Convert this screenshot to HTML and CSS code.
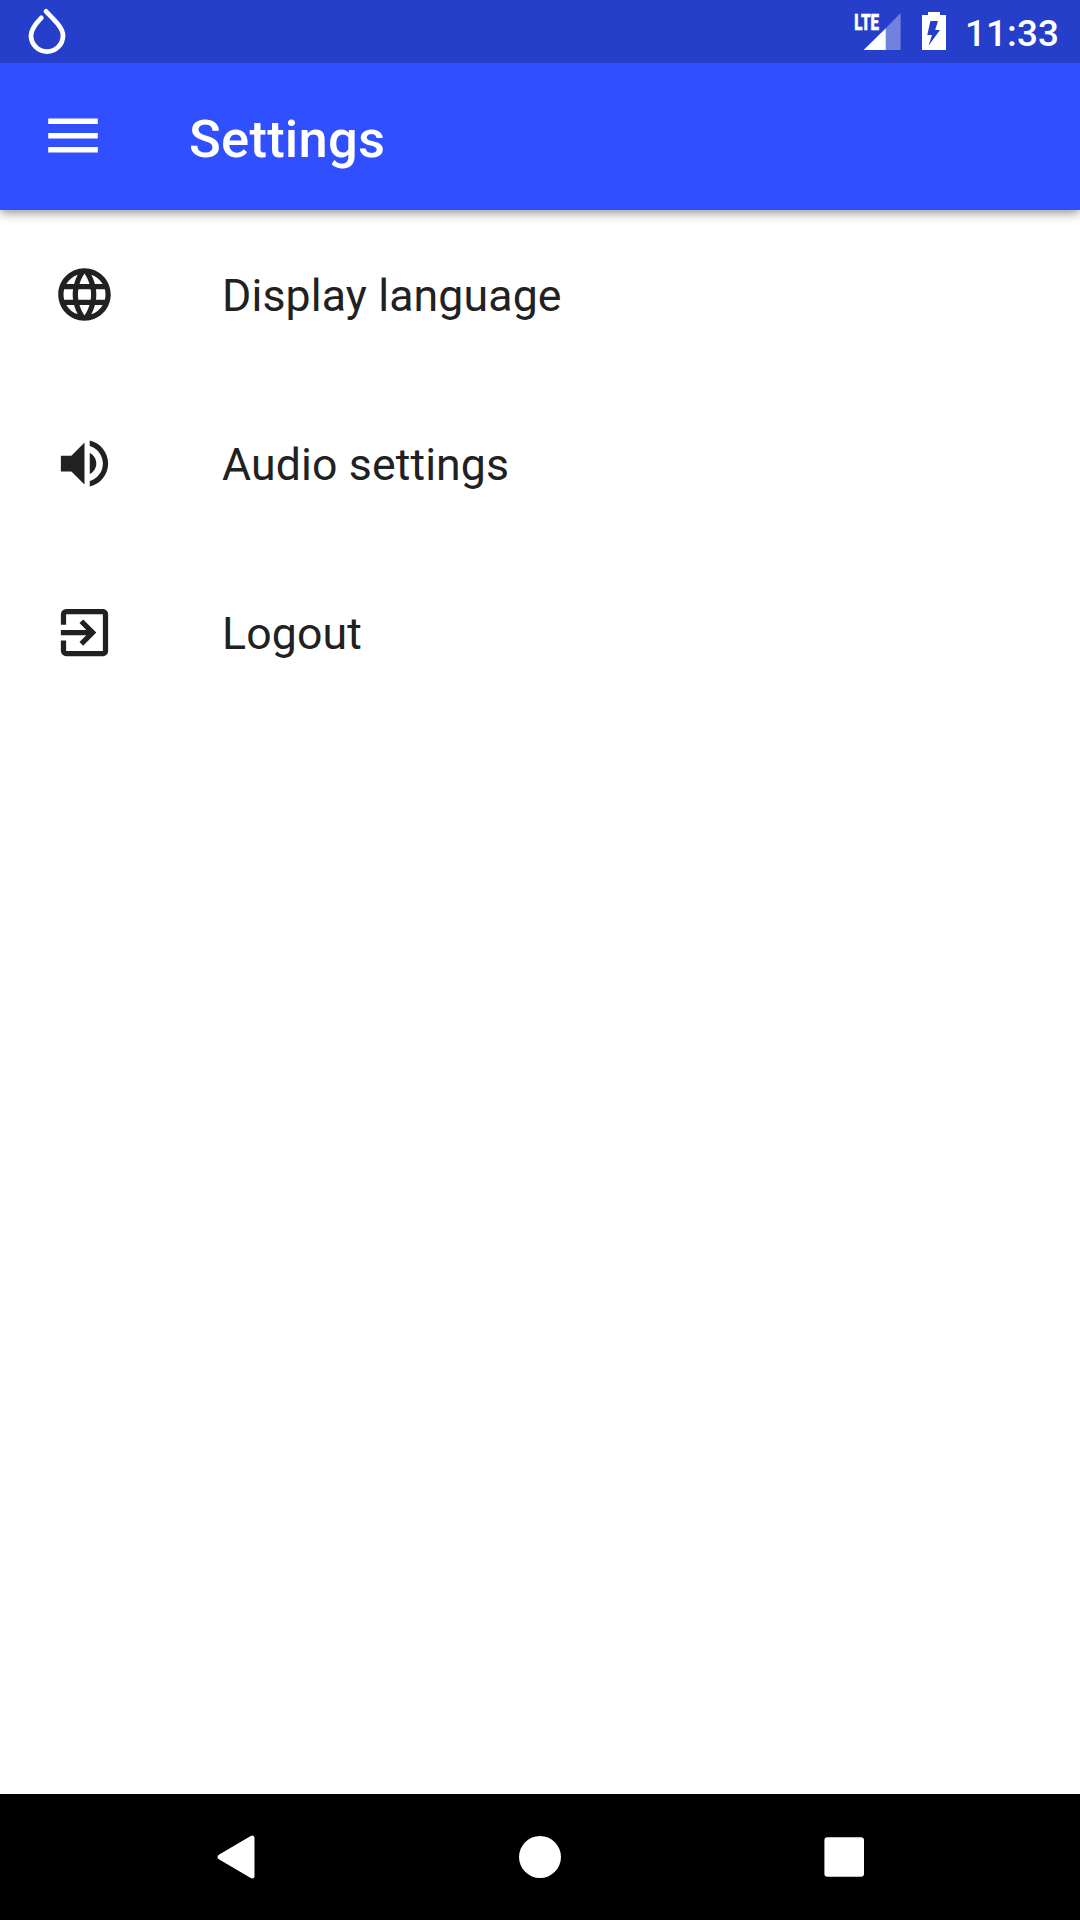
FILE: index.html
```html
<!DOCTYPE html>
<html lang="en">
<head>
<meta charset="utf-8">
<title>Settings</title>
<link rel="stylesheet" href="styles.css">
</head>
<body>
<div class="screen">
  <header class="status-bar">
    <svg class="drop-icon" width="38" height="48" viewBox="0 0 38 48"><path d="M13.3 10.9C7.6 16.7 3 22.6 3 28.6a16 16 0 0 0 32 0C35 22 30 16.5 18 4.4" fill="none" stroke="#fff" stroke-width="4.8" stroke-linecap="round"/></svg>
    <div class="status-icons">
      <svg class="signal-icon" width="50" height="52" viewBox="0 -12 50 52">
        <path d="M33.8 16.2 48.6 1v37H33.8z" fill="#fff" fill-opacity=".35"/>
        <path d="M11.6 38 33.8 16.2V38z" fill="#fff"/>
        <text class="network" x="2.3" y="17.6" textLength="24.6" lengthAdjust="spacingAndGlyphs">LTE</text>
      </svg>
      <svg class="battery-icon" width="24" height="38" viewBox="0 0 24 38"><path fill="#fff" fill-rule="evenodd" d="M6 0h12v3h6v35H0V3h6zM8.4 9 5.3 23H10L6.5 33.8 18 18h-4.8L16 9z"/></svg>
      <span class="clock">11:33</span>
    </div>
  </header>
  <div class="app-bar">
    <svg class="menu-icon" width="50" height="36" viewBox="0 0 50 36"><path fill="#fff" d="M.2.5h49.6v5.4H.2zM.2 15h49.6v5.4H.2zM.2 29h49.6v5.4H.2z"/></svg>
    <h1 class="title">Settings</h1>
  </div>
  <ul class="settings">
    <li class="setting">
      <svg class="setting-icon" viewBox="0 0 24 24"><path d="M11.99 2C6.47 2 2 6.48 2 12s4.47 10 9.99 10C17.52 22 22 17.52 22 12S17.52 2 11.99 2zm6.93 6h-2.95a15.65 15.65 0 0 0-1.38-3.56A8.03 8.03 0 0 1 18.92 8zM12 4.04c.83 1.2 1.48 2.53 1.91 3.96h-3.82c.43-1.43 1.08-2.76 1.91-3.96zM4.26 14C4.1 13.36 4 12.69 4 12s.1-1.36.26-2h3.38c-.08.66-.14 1.32-.14 2s.06 1.34.14 2H4.26zm.82 2h2.95c.32 1.25.78 2.45 1.38 3.56A7.987 7.987 0 0 1 5.08 16zm2.95-8H5.08a7.987 7.987 0 0 1 4.33-3.56A15.65 15.65 0 0 0 8.03 8zM12 19.96c-.83-1.2-1.48-2.53-1.91-3.96h3.82c-.43 1.43-1.08 2.76-1.91 3.96zM14.34 14H9.66c-.09-.66-.16-1.32-.16-2s.07-1.35.16-2h4.68c.09.65.16 1.32.16 2s-.07 1.34-.16 2zm.25 5.56c.6-1.11 1.06-2.31 1.38-3.56h2.95a8.03 8.03 0 0 1-4.33 3.56zM16.36 14c.08-.66.14-1.32.14-2s-.06-1.34-.14-2h3.38c.16.64.26 1.31.26 2s-.1 1.36-.26 2h-3.38z"/></svg>
      <span class="label">Display language</span>
    </li>
    <li class="setting">
      <svg class="setting-icon" viewBox="0 0 24 24"><path d="M3 9v6h4l5 5V4L7 9H3zm13.5 3c0-1.77-1.02-3.29-2.5-4.03v8.05c1.48-.73 2.5-2.25 2.5-4.02zM14 3.23v2.06c2.89.86 5 3.54 5 6.71s-2.11 5.85-5 6.71v2.06c4.01-.91 7-4.49 7-8.77s-2.99-7.86-7-8.77z"/></svg>
      <span class="label">Audio settings</span>
    </li>
    <li class="setting">
      <svg class="setting-icon" viewBox="0 0 24 24"><path d="M10.09 15.59 11.5 17l5-5-5-5-1.41 1.41L12.67 11H3v2h9.67l-2.58 2.59zM19 3H5a2 2 0 0 0-2 2v4h2V5h14v14H5v-4H3v4a2 2 0 0 0 2 2h14c1.1 0 2-.9 2-2V5c0-1.1-.9-2-2-2z"/></svg>
      <span class="label">Logout</span>
    </li>
  </ul>
  <nav class="nav-bar">
    <svg width="40" height="44" viewBox="0 0 40 44"><path d="M4.1 22 36 3.1v37.8z" fill="#fff" stroke="#fff" stroke-width="5" stroke-linejoin="round"/></svg>
    <svg width="42" height="42" viewBox="0 0 42 42"><circle cx="21" cy="21" r="21" fill="#fff"/></svg>
    <svg width="40" height="40" viewBox="0 0 40 40"><rect x=".4" y=".2" width="39.6" height="39.6" rx="3" fill="#fff"/></svg>
  </nav>
</div>
</body>
</html>
```
FILE: styles.css
```css
* { box-sizing: border-box; }

body {
  margin: 0;
  font-family: Roboto, sans-serif;
  background: #fff;
}

svg { display: block; flex: none; }

.screen {
  display: flex;
  flex-direction: column;
  width: 1080px;
  height: 1920px;
  overflow: hidden;
}

.status-bar {
  display: flex;
  justify-content: space-between;
  height: 63px;
  padding: 0 21px 0 28px;
  background: #263fcb;
  color: #fff;
}

.drop-icon { margin-top: 7px; }

.status-icons { display: flex; }

.signal-icon { margin-right: 20px; }

.network {
  font-size: 22px;
  font-weight: 900;
  fill: #fff;
  stroke: #fff;
  stroke-width: .5px;
}

.battery-icon { margin: 12px 19px 0 0; }

.clock {
  padding-top: 2px;
  font-size: 36.75px;
  font-weight: 500;
  line-height: 63px;
  letter-spacing: .15px;
}

.app-bar {
  display: flex;
  align-items: center;
  gap: 91px;
  height: 147px;
  padding-left: 48px;
  background: #304ffe;
  color: #fff;
  box-shadow: 0 3px 10px rgba(0, 0, 0, .42);
  clip-path: inset(0 0 -20px 0);
  z-index: 1;
}

.menu-icon { margin-bottom: 2px; }

.title {
  margin: 4px 0 0;
  font-size: 52.5px;
  font-weight: 500;
  line-height: 62px;
  letter-spacing: .25px;
}

.settings {
  flex: 1;
  margin: 0;
  padding: 0;
  list-style: none;
}

.setting {
  display: flex;
  align-items: center;
  gap: 106px;
  height: 169px;
  padding-left: 53px;
  color: #212121;
}

.setting-icon {
  width: 63px;
  height: 63px;
  fill: #212121;
}

.label {
  padding-top: 2px;
  font-size: 44.625px;
  line-height: 60px;
  letter-spacing: .13px;
}

.nav-bar {
  display: flex;
  align-items: center;
  justify-content: space-between;
  height: 126px;
  padding: 0 216px;
  background: #000;
}
```
